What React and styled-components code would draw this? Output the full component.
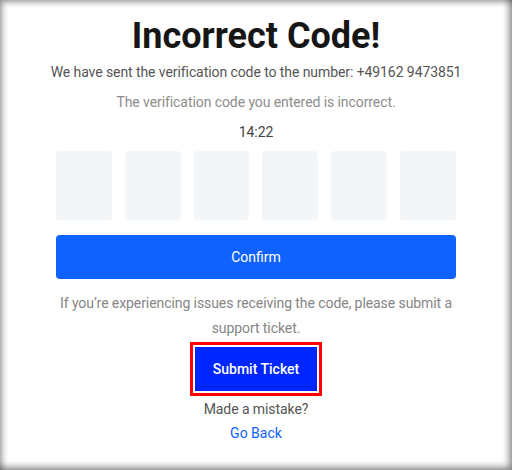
import React from 'react'
import styled, { createGlobalStyle } from 'styled-components'

const GlobalStyle = createGlobalStyle`
  html, body {
    margin: 0;
    padding: 0;
    background: #ffffff;
  }
  body {
    font-family: Roboto, "Liberation Sans", Arial, sans-serif;
  }
`

const Frame = styled.div`
  box-sizing: border-box;
  width: 512px;
  height: 470px;
  padding-top: 12px;
  display: flex;
  flex-direction: column;
  align-items: center;
  background: #ffffff;
  box-shadow: inset 3px 3px 6px -1px rgba(0, 0, 0, 0.4),
    inset -4px -4px 7px -1px rgba(0, 0, 0, 0.45);
`

const Title = styled.h1`
  margin: 0;
  font-size: 36px;
  line-height: 48px;
  font-weight: 700;
  color: #161616;
`

const Text = styled.p`
  margin: ${(p) => p.$top || 0}px 0 0;
  font-size: 14px;
  letter-spacing: -0.08px;
  line-height: ${(p) => p.$lh || 20}px;
  color: ${(p) => p.$color || '#444'};
  text-align: center;
  width: ${(p) => p.$width || 460}px;
`

const CodeRow = styled.div`
  margin-top: 9px;
  width: 400px;
  display: grid;
  grid-template-columns: repeat(6, 1fr);
  gap: 13px;
`

const CodeBox = styled.div`
  height: 69px;
  border-radius: 4px;
  background: #f3f6f9;
`

const ConfirmButton = styled.button`
  margin-top: 15px;
  width: 400px;
  height: 44px;
  border: none;
  border-radius: 4px;
  background: #0f62fe;
  color: #ffffff;
  font-family: inherit;
  font-size: 14px;
`

const TicketButton = styled.button`
  margin-top: 6px;
  width: 122px;
  height: 44px;
  border: none;
  border-radius: 0;
  background: #0026ff;
  color: #ffffff;
  font-family: inherit;
  font-size: 14px;
  font-weight: 500;
  outline: 3px solid #ff0000;
  outline-offset: 2px;
`

const BackLink = styled.a`
  margin-top: 4px;
  font-size: 14px;
  line-height: 20px;
  color: #0f62fe;
  text-decoration: none;
`

const App = () => {
  return (
    <>
      <GlobalStyle />
      <Frame>
        <Title>Incorrect Code!</Title>
        <Text $top={2} $color='#555'>
          We have sent the verification code to the number: +49162 9473851
        </Text>
        <Text $top={10} $color='#8d8d8d'>
          The verification code you entered is incorrect.
        </Text>
        <Text $top={10} $color='#444'>
          14:22
        </Text>
        <CodeRow>
          {[0, 1, 2, 3, 4, 5].map((i) => (
            <CodeBox key={i} />
          ))}
        </CodeRow>
        <ConfirmButton>Confirm</ConfirmButton>
        <Text $top={12} $lh={25} $width={400} $color='#858585'>
          If you’re experiencing issues receiving the code, please submit a
          support ticket.
        </Text>
        <TicketButton>Submit Ticket</TicketButton>
        <Text $top={8} $color='#555'>
          Made a mistake?
        </Text>
        <BackLink href='#'>Go Back</BackLink>
      </Frame>
    </>
  )
}

export default App
